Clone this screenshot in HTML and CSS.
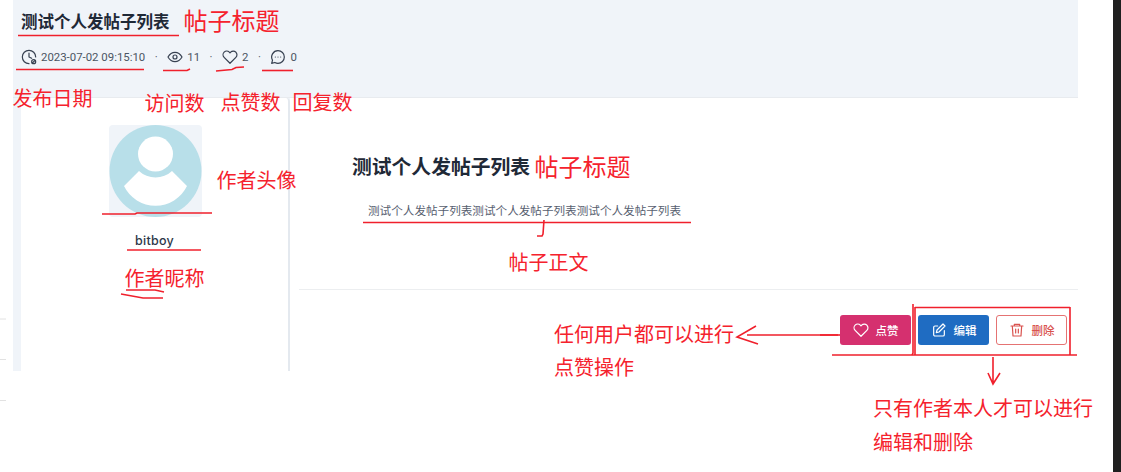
FILE: index.html
```html
<!DOCTYPE html>
<html lang="zh-CN">
<head>
  <meta charset="UTF-8">
  <title>测试个人发帖子列表</title>
  <link rel="stylesheet" href="styles.css">
</head>
<body>
  <div class="screen">
    <div class="post">
      <header class="post-head">
        <h1 class="head-title">测试个人发帖子列表</h1>
        <div class="meta">
          <span class="meta-item meta-date">
            <svg class="meta-icon" viewBox="0 0 24 24"><path d="M12 22a10 10 0 1 1 10-10"/><path d="M12 6v6l4 2"/><circle cx="19" cy="19" r="3"/><path d="M17 21l4-4"/></svg>
            2023-07-02 09:15:10
          </span>
          <span class="dot">·</span>
          <span class="meta-item">
            <svg class="meta-icon" viewBox="0 0 24 24"><path d="M1.500 12S5.500 5 12 5s10.500 7 10.500 7-4 7-10.500 7S1.500 12 1.500 12z"/><circle cx="12" cy="12" r="3"/></svg>
            11
          </span>
          <span class="dot">·</span>
          <span class="meta-item">
            <svg class="meta-icon" viewBox="0 0 24 24"><path d="M20.800 4.800a5.500 5.500 0 0 0-7.800 0L12 5.900l-1-1.100a5.500 5.500 0 0 0-7.800 7.800L12 21.400l8.800-8.800a5.500 5.500 0 0 0 0-7.800z"/></svg>
            2
          </span>
          <span class="dot">·</span>
          <span class="meta-item">
            <svg class="meta-icon" viewBox="0 0 24 24"><path d="M12 2.500a9.500 9.500 0 0 1 0 19c-1.800 0-3.400-.5-4.800-1.300L2.500 21.500l1.300-4.700A9.500 9.500 0 0 1 12 2.500z"/><path d="M8 12h.01M12 12h.01M16 12h.01"/></svg>
            0
          </span>
        </div>
      </header>

      <div class="post-body">
        <aside class="author">
          <div class="avatar">
            <svg viewBox="0 0 93 92" width="93" height="92">
              <circle cx="46.500" cy="46" r="46" fill="#b8dfe9"/>
              <circle cx="46.500" cy="29" r="17.500" fill="#fff"/>
              <path d="M15 61 L30 46 A24 24 0 0 0 63 46 L78 61 A35 35 0 0 1 15 61z" fill="#fff"/>
            </svg>
          </div>
          <div class="author-name">bitboy</div>
        </aside>

        <article class="content">
          <div class="content-main">
            <h2 class="content-title">测试个人发帖子列表</h2>
            <p class="content-text">测试个人发帖子列表测试个人发帖子列表测试个人发帖子列表</p>
          </div>
          <div class="actions">
            <button class="btn btn-like">
              <svg viewBox="0 0 24 24"><path d="M20.800 4.800a5.500 5.500 0 0 0-7.800 0L12 5.900l-1-1.100a5.500 5.500 0 0 0-7.800 7.800L12 21.400l8.800-8.800a5.500 5.500 0 0 0 0-7.800z"/></svg>
              点赞
            </button>
            <button class="btn btn-edit">
              <svg viewBox="0 0 24 24"><path d="M20 13v6a2 2 0 0 1-2 2H6a2 2 0 0 1-2-2V8a2 2 0 0 1 2-2h4"/><path d="M18 3l3 3-9 9-4 1 1-4z"/></svg>
              编辑
            </button>
            <button class="btn btn-delete">
              <svg viewBox="0 0 24 24"><path d="M3 6h18M8 6V3.500h8V6M5 6l1 15h12l1-15M10 10.500v6M14 10.500v6"/></svg>
              删除
            </button>
          </div>
        </article>
      </div>
    </div>
    <div class="edge"></div>
  </div>

  <svg class="marks" viewBox="0 0 1121 472" width="1121" height="472">
    <g class="stray">
      <path d="M0 319h6M0 359.500h6M0 400.500h6"/>
    </g>
    <g class="ink">
      <path d="M18 35.500h161"/>
      <path d="M16 69.500h128"/>
      <path d="M163 70.500h24l3-1.500"/>
      <path d="M216 71l16-1.500 4-2 8-.5"/>
      <path d="M262 70.500h31"/>
      <path d="M102 214h33l2-1h75"/>
      <path d="M127 250h74"/>
      <path d="M126 290h29l9 2"/>
      <path d="M121 294l22 4h20"/>
      <path d="M363 222.500h328"/>
      <path d="M544 220l-1 14-1 2h-5"/>
      <path d="M756 326l-19 11 21 7M747 335h91"/>
      <path d="M820 335h20"/>
      <path d="M913 304v49l-1 2"/>
      <path d="M832 355h245M915 307v48M915 307.500h155M1070 307v48"/>
      <path d="M993 357v27M988 373l5 11 7-11"/>
    </g>
  </svg>

  <span class="note note-big note-head">帖子标题</span>
  <span class="note note-date">发布日期</span>
  <span class="note note-views">访问数</span>
  <span class="note note-likes">点赞数</span>
  <span class="note note-replies">回复数</span>
  <span class="note note-avatar">作者头像</span>
  <span class="note note-nick">作者昵称</span>
  <span class="note note-big note-title">帖子标题</span>
  <span class="note note-text">帖子正文</span>
  <span class="note note-like-1">任何用户都可以进行</span>
  <span class="note note-like-2">点赞操作</span>
  <span class="note note-owner-1">只有作者本人才可以进行</span>
  <span class="note note-owner-2">编辑和删除</span>
</body>
</html>
```

FILE: styles.css
```css
body {
  margin: 0;
  height: 472px;
  overflow: hidden;
  position: relative;
  background: #fff;
  font-family: Inter, "Noto Sans CJK SC", sans-serif;
  color: #1f2937;
}

.screen {
  display: flex;
  height: 472px;
}

.post {
  width: 1065px;
  height: 371px;
  margin-left: 13px;
  flex: none;
}

.edge {
  width: 8px;
  margin-left: auto;
  background: #1f1f1f;
}

/* header band */
.post-head {
  box-sizing: border-box;
  height: 98px;
  padding: 12px 8px 0;
  background: #f0f4f9;
  border-bottom: 1px solid #e8ebef;
}

.head-title {
  margin: 0;
  font-size: 16.500px;
  line-height: 20px;
  font-weight: 700;
}

.meta {
  display: flex;
  align-items: center;
  margin-top: 15px;
  height: 20px;
  font-family: Roboto, "Noto Sans CJK SC", sans-serif;
  font-size: 11.400px;
  color: #4b5563;
}

.meta-item {
  display: flex;
  align-items: center;
  gap: 4px;
}

.meta-icon {
  width: 16px;
  height: 16px;
  fill: none;
  stroke: #374151;
  stroke-width: 1.800;
  stroke-linecap: round;
  stroke-linejoin: round;
}

.dot {
  width: 22px;
  text-align: center;
  flex: none;
}

/* lower part */
.post-body {
  display: flex;
  height: 273px;
  padding-left: 8px;
  background: #f0f4f9;
}

.author {
  box-sizing: border-box;
  width: 269px;
  flex: none;
  padding-top: 27px;
  background: #fff;
  border-right: 2px solid #e4e9ef;
  border-radius: 4px 4px 0 0;
  text-align: center;
}

.avatar {
  width: 93px;
  height: 92px;
  margin-left: 88px;
  background: #f0f4f9;
  border-radius: 4px;
}

.avatar svg {
  display: block;
}

.author-name {
  margin-top: 16px;
  font-size: 12.500px;
  line-height: 16px;
  font-weight: 500;
  letter-spacing: 0.3px;
  color: #2d3748;
}

.content {
  flex: 1;
  background: #fff;
  padding-left: 9px;
}

.content-main {
  box-sizing: border-box;
  height: 192px;
  padding: 56px 0 0 53px;
  border-bottom: 1px solid #eceef0;
}

.content-title {
  margin: 0;
  font-size: 19.800px;
  line-height: 26px;
  font-weight: 700;
}

.content-text {
  margin: 23px 0 0 16px;
  font-size: 11.600px;
  line-height: 16px;
  color: #57606f;
}

.actions {
  display: flex;
  gap: 7px;
  padding: 25px 11px 0 0;
  justify-content: flex-end;
}

.btn {
  box-sizing: border-box;
  display: flex;
  align-items: center;
  justify-content: center;
  gap: 7px;
  width: 71px;
  height: 30px;
  padding: 0;
  border: 1px solid transparent;
  border-radius: 3px;
  font-family: inherit;
  font-size: 11.500px;
  font-weight: 500;
  color: #fff;
}

.btn svg {
  width: 16px;
  height: 16px;
  fill: none;
  stroke: currentColor;
  stroke-width: 1.800;
  stroke-linecap: round;
  stroke-linejoin: round;
}

.btn-like {
  background: #d5306f;
}

.btn-edit {
  background: #1f6cc2;
}

.btn-delete {
  background: #fff;
  border-color: #e57373;
  color: #d9534f;
}

/* red annotations drawn on top of the screenshot */
.marks {
  position: absolute;
  left: 0;
  top: 0;
  fill: none;
}

.stray path {
  stroke: #e2e2e2;
  stroke-width: 1;
}

.ink path {
  stroke: #f0202c;
  stroke-width: 1.600;
}

.note {
  position: absolute;
  font-family: "Noto Sans CJK SC", sans-serif;
  font-size: 20px;
  line-height: 28px;
  color: #f5222d;
  white-space: nowrap;
}

.note-big {
  font-size: 24px;
  line-height: 32px;
}

.note-head { left: 183.500px; top: 4px; }
.note-date { left: 12.500px; top: 84px; }
.note-views { left: 144.500px; top: 89px; }
.note-likes { left: 220.500px; top: 88px; }
.note-replies { left: 292.500px; top: 88px; }
.note-avatar { left: 216.500px; top: 166px; }
.note-nick { left: 124.500px; top: 264px; }
.note-title { left: 534.500px; top: 150px; }
.note-text { left: 508.500px; top: 248px; }
.note-like-1 { left: 554px; top: 320px; }
.note-like-2 { left: 554px; top: 353px; }
.note-owner-1 { left: 873px; top: 394px; }
.note-owner-2 { left: 873px; top: 428px; }
```
